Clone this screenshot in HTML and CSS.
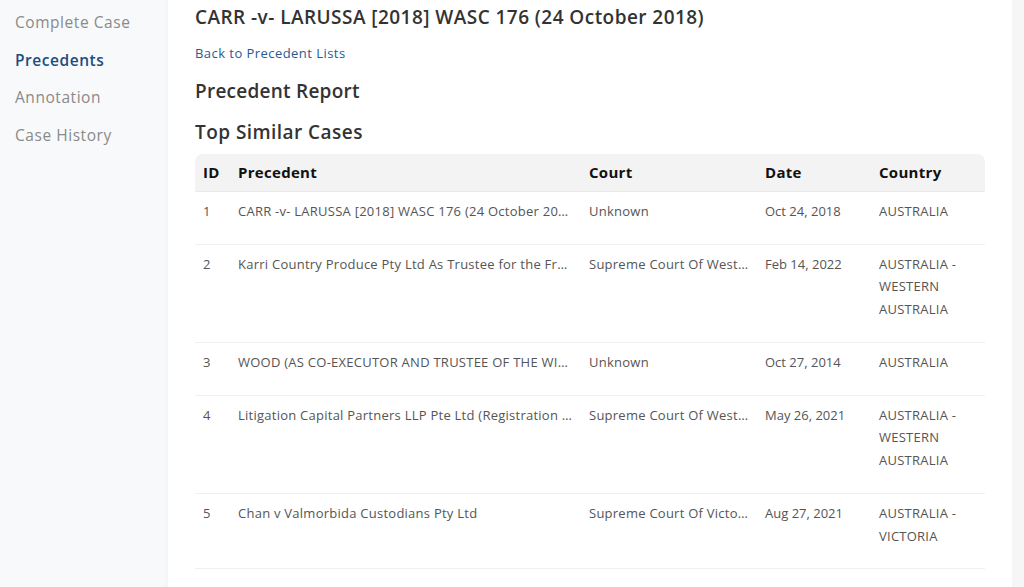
FILE: index.html
```html
<!DOCTYPE html>
<html lang="en">
<head>
<meta charset="utf-8">
<title>Precedent Report</title>
<link rel="stylesheet" href="styles.css">
</head>
<body>
<div class="layout">
  <nav class="sidebar">
    <a class="nav-item">Complete Case</a>
    <a class="nav-item active">Precedents</a>
    <a class="nav-item">Annotation</a>
    <a class="nav-item">Case History</a>
  </nav>
  <main class="main">
    <h1 class="title">CARR -v- LARUSSA [2018] WASC 176 (24 October 2018)</h1>
    <a class="back-link">Back to Precedent Lists</a>
    <h2 class="section-title">Precedent Report</h2>
    <h2 class="section-title sub">Top Similar Cases</h2>
    <table class="cases">
      <colgroup>
        <col class="c-id">
        <col class="c-prec">
        <col class="c-court">
        <col class="c-date">
        <col class="c-country">
      </colgroup>
      <thead>
        <tr><th>ID</th><th>Precedent</th><th>Court</th><th>Date</th><th>Country</th></tr>
      </thead>
      <tbody>
        <tr>
          <td>1</td>
          <td><div class="clip">CARR -v- LARUSSA [2018] WASC 176 (24 October 2018)</div></td>
          <td><div class="clip">Unknown</div></td>
          <td>Oct 24, 2018</td>
          <td>AUSTRALIA</td>
        </tr>
        <tr>
          <td>2</td>
          <td><div class="clip">Karri Country Produce Pty Ltd As Trustee for the Fraser Family Trust</div></td>
          <td><div class="clip">Supreme Court Of Western Australia</div></td>
          <td>Feb 14, 2022</td>
          <td>AUSTRALIA - WESTERN AUSTRALIA</td>
        </tr>
        <tr>
          <td>3</td>
          <td><div class="clip">WOOD (AS CO-EXECUTOR AND TRUSTEE OF THE WILL OF THE LATE)</div></td>
          <td><div class="clip">Unknown</div></td>
          <td>Oct 27, 2014</td>
          <td>AUSTRALIA</td>
        </tr>
        <tr>
          <td>4</td>
          <td><div class="clip">Litigation Capital Partners LLP Pte Ltd (Registration No. T08LL1532K)</div></td>
          <td><div class="clip">Supreme Court Of Western Australia</div></td>
          <td>May 26, 2021</td>
          <td>AUSTRALIA - WESTERN AUSTRALIA</td>
        </tr>
        <tr>
          <td>5</td>
          <td><div class="clip">Chan v Valmorbida Custodians Pty Ltd</div></td>
          <td><div class="clip">Supreme Court Of Victoria</div></td>
          <td>Aug 27, 2021</td>
          <td>AUSTRALIA - VICTORIA</td>
        </tr>
      </tbody>
    </table>
  </main>
  <div class="rail"></div>
</div>
</body>
</html>
```

FILE: styles.css
```css
* { box-sizing: border-box; }
html, body {
  margin: 0;
  padding: 0;
  height: 100%;
  overflow: hidden;
  background: #ffffff;
  font-family: "Open Sans", "DejaVu Sans", sans-serif;
}
.layout {
  display: flex;
  height: 587px;
}
.sidebar {
  width: 168px;
  flex: none;
  background: #f8f9fa;
  display: flex;
  flex-direction: column;
  gap: 15px;
  padding: 11px 0 0 15px;
  box-shadow: inset -4px 0 6px -4px rgba(0,0,0,0.04);
}
.nav-item {
  font-size: 15.5px;
  line-height: 22.5px;
  color: #8a8a8a;
  font-weight: 500;
  text-decoration: none;
  letter-spacing: 0.55px;
}
.nav-item.active {
  color: #214b82;
  font-weight: 600;
}
.main {
  flex: 1;
  padding: 3px 23px 0 27px;
  background: #fff;
}
.rail {
  width: 12px;
  flex: none;
  background: #f6f6f6;
}
.title {
  margin: 0;
  font-size: 19px;
  line-height: 28px;
  font-weight: 600;
  color: #333;
  letter-spacing: 0.45px;
}
.back-link {
  display: block;
  margin-top: 13px;
  font-size: 13px;
  line-height: 18px;
  color: #275a92;
  text-decoration: none;
  letter-spacing: 0.45px;
}
.section-title {
  margin: 16px 0 0;
  font-size: 19px;
  line-height: 26px;
  font-weight: 600;
  color: #333;
  letter-spacing: 0.25px;
}
.section-title.sub {
  margin-top: 15px;
  letter-spacing: 0.45px;
}
.cases {
  margin-top: 9px;
  width: 790px;
  border-collapse: separate;
  border-spacing: 0;
  table-layout: fixed;
  font-size: 13px;
  color: #555;
}
.c-id { width: 35px; }
.c-prec { width: 351px; }
.c-court { width: 176px; }
.c-date { width: 114px; }
.c-country { width: 114px; }
.cases th {
  background: #f3f3f3;
  color: #111;
  font-weight: 700;
  font-size: 15px;
  letter-spacing: 0.3px;
  text-align: left;
  padding: 7px 8px 8px;
  line-height: 22px;
  border-bottom: 1px solid #e9e9e9;
}
.cases th:first-child { border-top-left-radius: 8px; }
.cases th:last-child { border-top-right-radius: 8px; }
.cases td {
  vertical-align: top;
  padding: 8px 8px 21px;
  line-height: 22.5px;
  border-bottom: 1px solid #efefef;
  letter-spacing: 0.25px;
}
.cases td:nth-child(4) { letter-spacing: 0; }
.cases tbody tr:nth-child(2) td,
.cases tbody tr:nth-child(4) td { padding-bottom: 22px; }
.clip {
  white-space: nowrap;
  overflow: hidden;
  text-overflow: ellipsis;
}
```
